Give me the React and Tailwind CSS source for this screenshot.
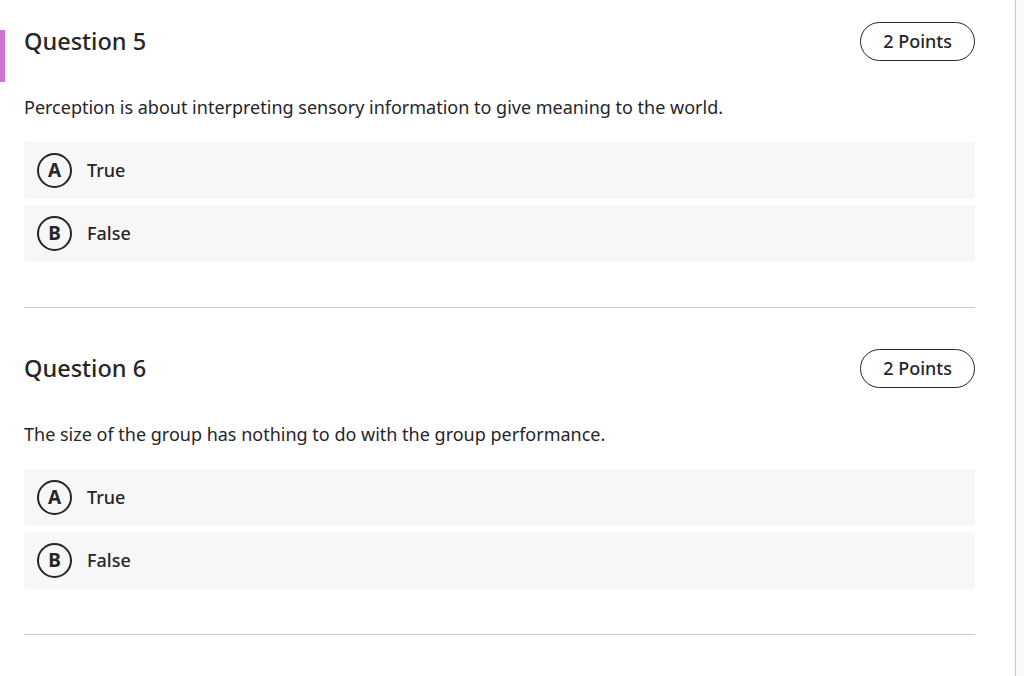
import React from 'react';

const questions = [
  {
    num: 5,
    text: 'Perception is about interpreting sensory information to give meaning to the world.',
    active: true,
  },
  {
    num: 6,
    text: 'The size of the group has nothing to do with the group performance.',
    active: false,
  },
];

const Option = ({ letter, label }) => (
  <div className="h-[57px] bg-[#f7f7f7] rounded-[3px] flex items-center pl-[13px]">
    <span className="w-[35px] h-[35px] rounded-full border-[2.5px] border-[#262626] flex items-center justify-center text-[19px] font-bold text-[#262626] leading-none">
      {letter}
    </span>
    <span className="ml-[15px] text-[18px] font-medium text-[#262626]">{label}</span>
  </div>
);

const Question = ({ q }) => (
  <div className="relative pl-6 pr-10">
    {q.active && <div className="absolute left-0 top-[10px] w-[5px] h-[52px] bg-[#cc72d3]" />}
    <div className="flex items-center justify-between pt-[1px] h-[42px]">
      <h2 className="text-[23.5px] font-medium text-[#262626]">Question {q.num}</h2>
      <span className="h-[39px] px-[22px] rounded-full border border-[#262626] flex items-center text-[18px] font-medium text-[#262626]">
        2 Points
      </span>
    </div>
    <p className="mt-[33px] text-[18px] text-[#262626] leading-[24px]">{q.text}</p>
    <div className="mt-[23px] flex flex-col gap-[6px]">
      <Option letter="A" label="True" />
      <Option letter="B" label="False" />
    </div>
    <div className="mt-[45px] border-t border-[#c8c8c8]" />
  </div>
);

export default function App() {
  return (
    <div className="flex w-[1024px] h-[676px] bg-white overflow-hidden" style={{ fontFamily: '"Noto Sans", sans-serif' }}>
      <div className="w-[1016px] border-r border-[#c8c8c8] pt-[20px] flex flex-col gap-[39px]">
        {questions.map((q) => (
          <Question key={q.num} q={q} />
        ))}
      </div>
      <div className="flex-1 bg-[#fafafa]" />
    </div>
  );
}
